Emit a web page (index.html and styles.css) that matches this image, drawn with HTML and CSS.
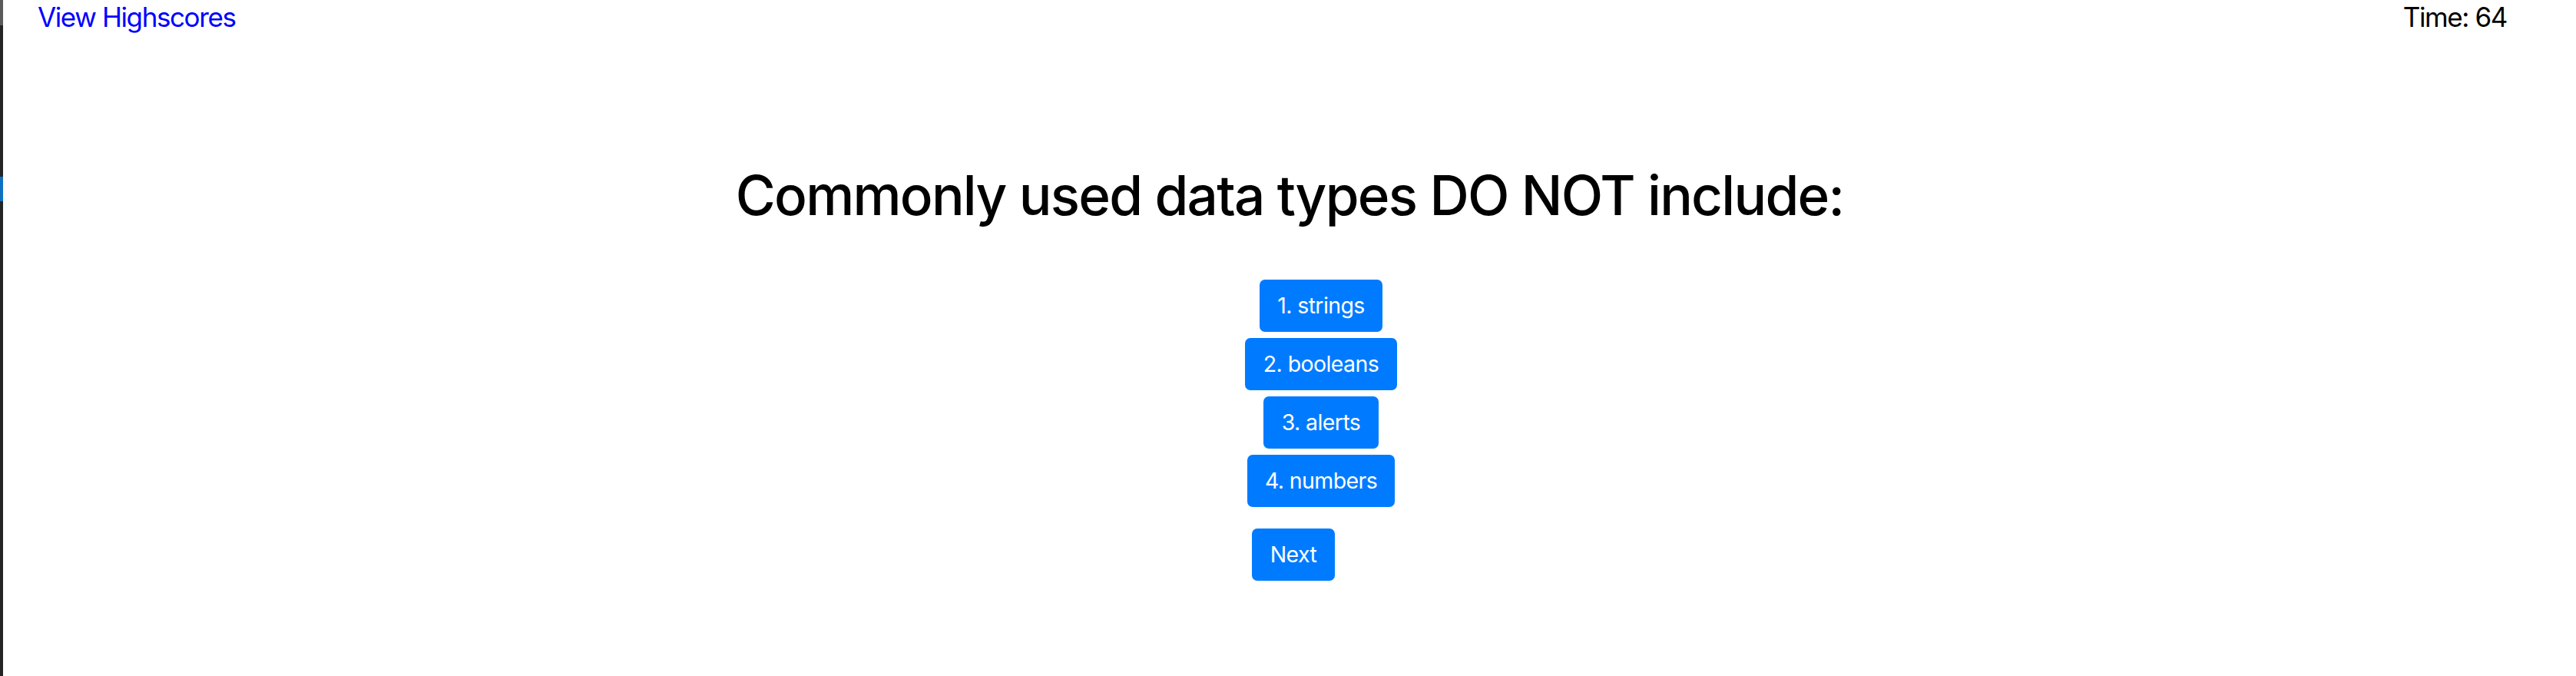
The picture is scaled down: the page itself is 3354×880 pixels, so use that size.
FILE: index.html
```html
<!DOCTYPE html>
<html>
<head>
<meta charset="utf-8">
<link rel="stylesheet" href="styles.css">
</head>
<body>
<div class="frame">
  <div class="strip"><div class="strip-top"></div><div class="strip-mark"></div></div>
  <div class="main">
    <header class="topbar">
      <a class="highscores" href="#">View Highscores</a>
      <span class="timer">Time: 64</span>
    </header>
    <h1 class="question">Commonly used data types DO NOT include:</h1>
    <div class="answers">
      <button class="btn">1. strings</button>
      <button class="btn">2. booleans</button>
      <button class="btn">3. alerts</button>
      <button class="btn">4. numbers</button>
    </div>
    <div class="next-row">
      <button class="btn">Next</button>
    </div>
  </div>
</div>
</body>
</html>
```
FILE: styles.css
```css
html, body {
  margin: 0;
  padding: 0;
  background: #ffffff;
}
body {
  font-family: Inter, "Liberation Sans", sans-serif;
  color: #000;
}
.frame {
  display: flex;
  height: 880px;
}
.strip {
  width: 4px;
  background: #252526;
  display: flex;
  flex-direction: column;
}
.strip-top {
  height: 33px;
  background: #5a5a5a;
}
.strip-mark {
  margin-top: 197px;
  height: 32px;
  background: #0e70c0;
}
.main {
  flex: 1;
  display: flex;
  flex-direction: column;
}
.topbar {
  display: flex;
  justify-content: space-between;
  padding: 0 90px 0 45px;
  font-size: 35px;
  letter-spacing: -1.4px;
  line-height: 44px;
}
.highscores {
  color: #0000ff;
  text-decoration: none;
}
.question {
  margin: 168px 0 0 0;
  text-align: center;
  font-size: 71px;
  font-weight: 500;
  letter-spacing: -1.75px;
  line-height: 85px;
}
.answers {
  margin-top: 67px;
  display: flex;
  flex-direction: column;
  align-items: center;
  gap: 8px;
  padding-left: 82px;
}
.next-row {
  margin-top: 28px;
  display: flex;
  justify-content: center;
  padding-left: 10px;
}
.btn {
  font-family: Inter, "Liberation Sans", sans-serif;
  font-size: 28.5px;
  letter-spacing: -0.6px;
  line-height: 42.7px;
  padding: 10.7px 21.4px;
  border: 2px solid #007bff;
  border-radius: 7px;
  background: #007bff;
  color: #fff;
  cursor: pointer;
}
```
